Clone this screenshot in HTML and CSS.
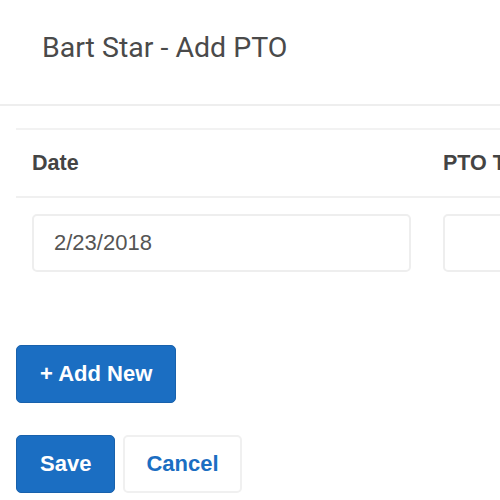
FILE: index.html
```html
<!DOCTYPE html>
<html>
  <head>
    <title>Bart Star - Add PTO</title>
    <link rel="stylesheet" href="styles.css">
  </head>
  <body>
    <div id="header">Bart Star - Add PTO</div>

    <div id="content">
      <!-- the pto rows, wider than the window -->
      <div class="grid-wrap">
        <table class="pto">
          <tr>
            <th class="col-date">Date</th>
            <th>PTO Type</th>
          </tr>
          <tr>
            <td class="col-date"><input type="text" class="field" value="2/23/2018" /></td>
            <td><input type="text" class="field" value="" /></td>
          </tr>
        </table>
      </div>

      <div class="actions add-row">
        <button class="btn btn-primary">+ Add New</button>
      </div>

      <div class="actions">
        <button class="btn btn-primary">Save</button>
        <button class="btn btn-light">Cancel</button>
      </div>
    </div>
  </body>
</html>
```

FILE: styles.css
```css
body {
  font-family: "Liberation Sans", Arial, sans-serif;
  margin: 0;
  overflow: hidden;
  background-color: #fff;
}

#header {
  font-family: Roboto, "Liberation Sans", sans-serif;
  font-size: 28.5px;
  color: #4a4a4a;
  padding-left: 42px;
  line-height: 96px;
  border-bottom: 2px solid #eee;
  box-sizing: border-box;
  height: 106px;
}

#content {
  padding: 0 0 0 16px;
}

.grid-wrap {
  margin-top: 22px;
  width: 700px;
}

table.pto {
  border-collapse: collapse;
  width: 100%;
  border-top: 2px solid #f2f2f2;
}

table.pto th {
  text-align: left;
  font-size: 21.5px;
  font-weight: bold;
  color: #444;
  height: 66px;
  padding: 0 16px;
  border-bottom: 2px solid #f0f0f0;
}

table.pto td {
  padding: 16px 16px 20px 16px;
}

table.pto .col-date {
  width: 379px;
}

.field {
  display: block;
  width: 100%;
  height: 58px;
  box-sizing: border-box;
  border: 2px solid #eee;
  border-radius: 5px;
  padding: 0 20px;
  font-family: "Liberation Sans", Arial, sans-serif;
  font-size: 22px;
  color: #555;
}

.actions {
  display: flex;
  gap: 8px;
  margin-top: 32px;
}

.add-row {
  margin-top: 53px;
}

.btn {
  font-family: "Liberation Sans", Arial, sans-serif;
  font-size: 22px;
  font-weight: bold;
  height: 58px;
  padding: 0 23px;
  border-radius: 5px;
  cursor: pointer;
}

.btn-primary {
  background-color: #1b6ec2;
  border: 1px solid #1861ac;
  color: #fff;
}

.btn-light {
  background-color: #fff;
  border: 2px solid #f0f0f0;
  color: #1b6ec2;
  padding: 0 21px;
}
```
